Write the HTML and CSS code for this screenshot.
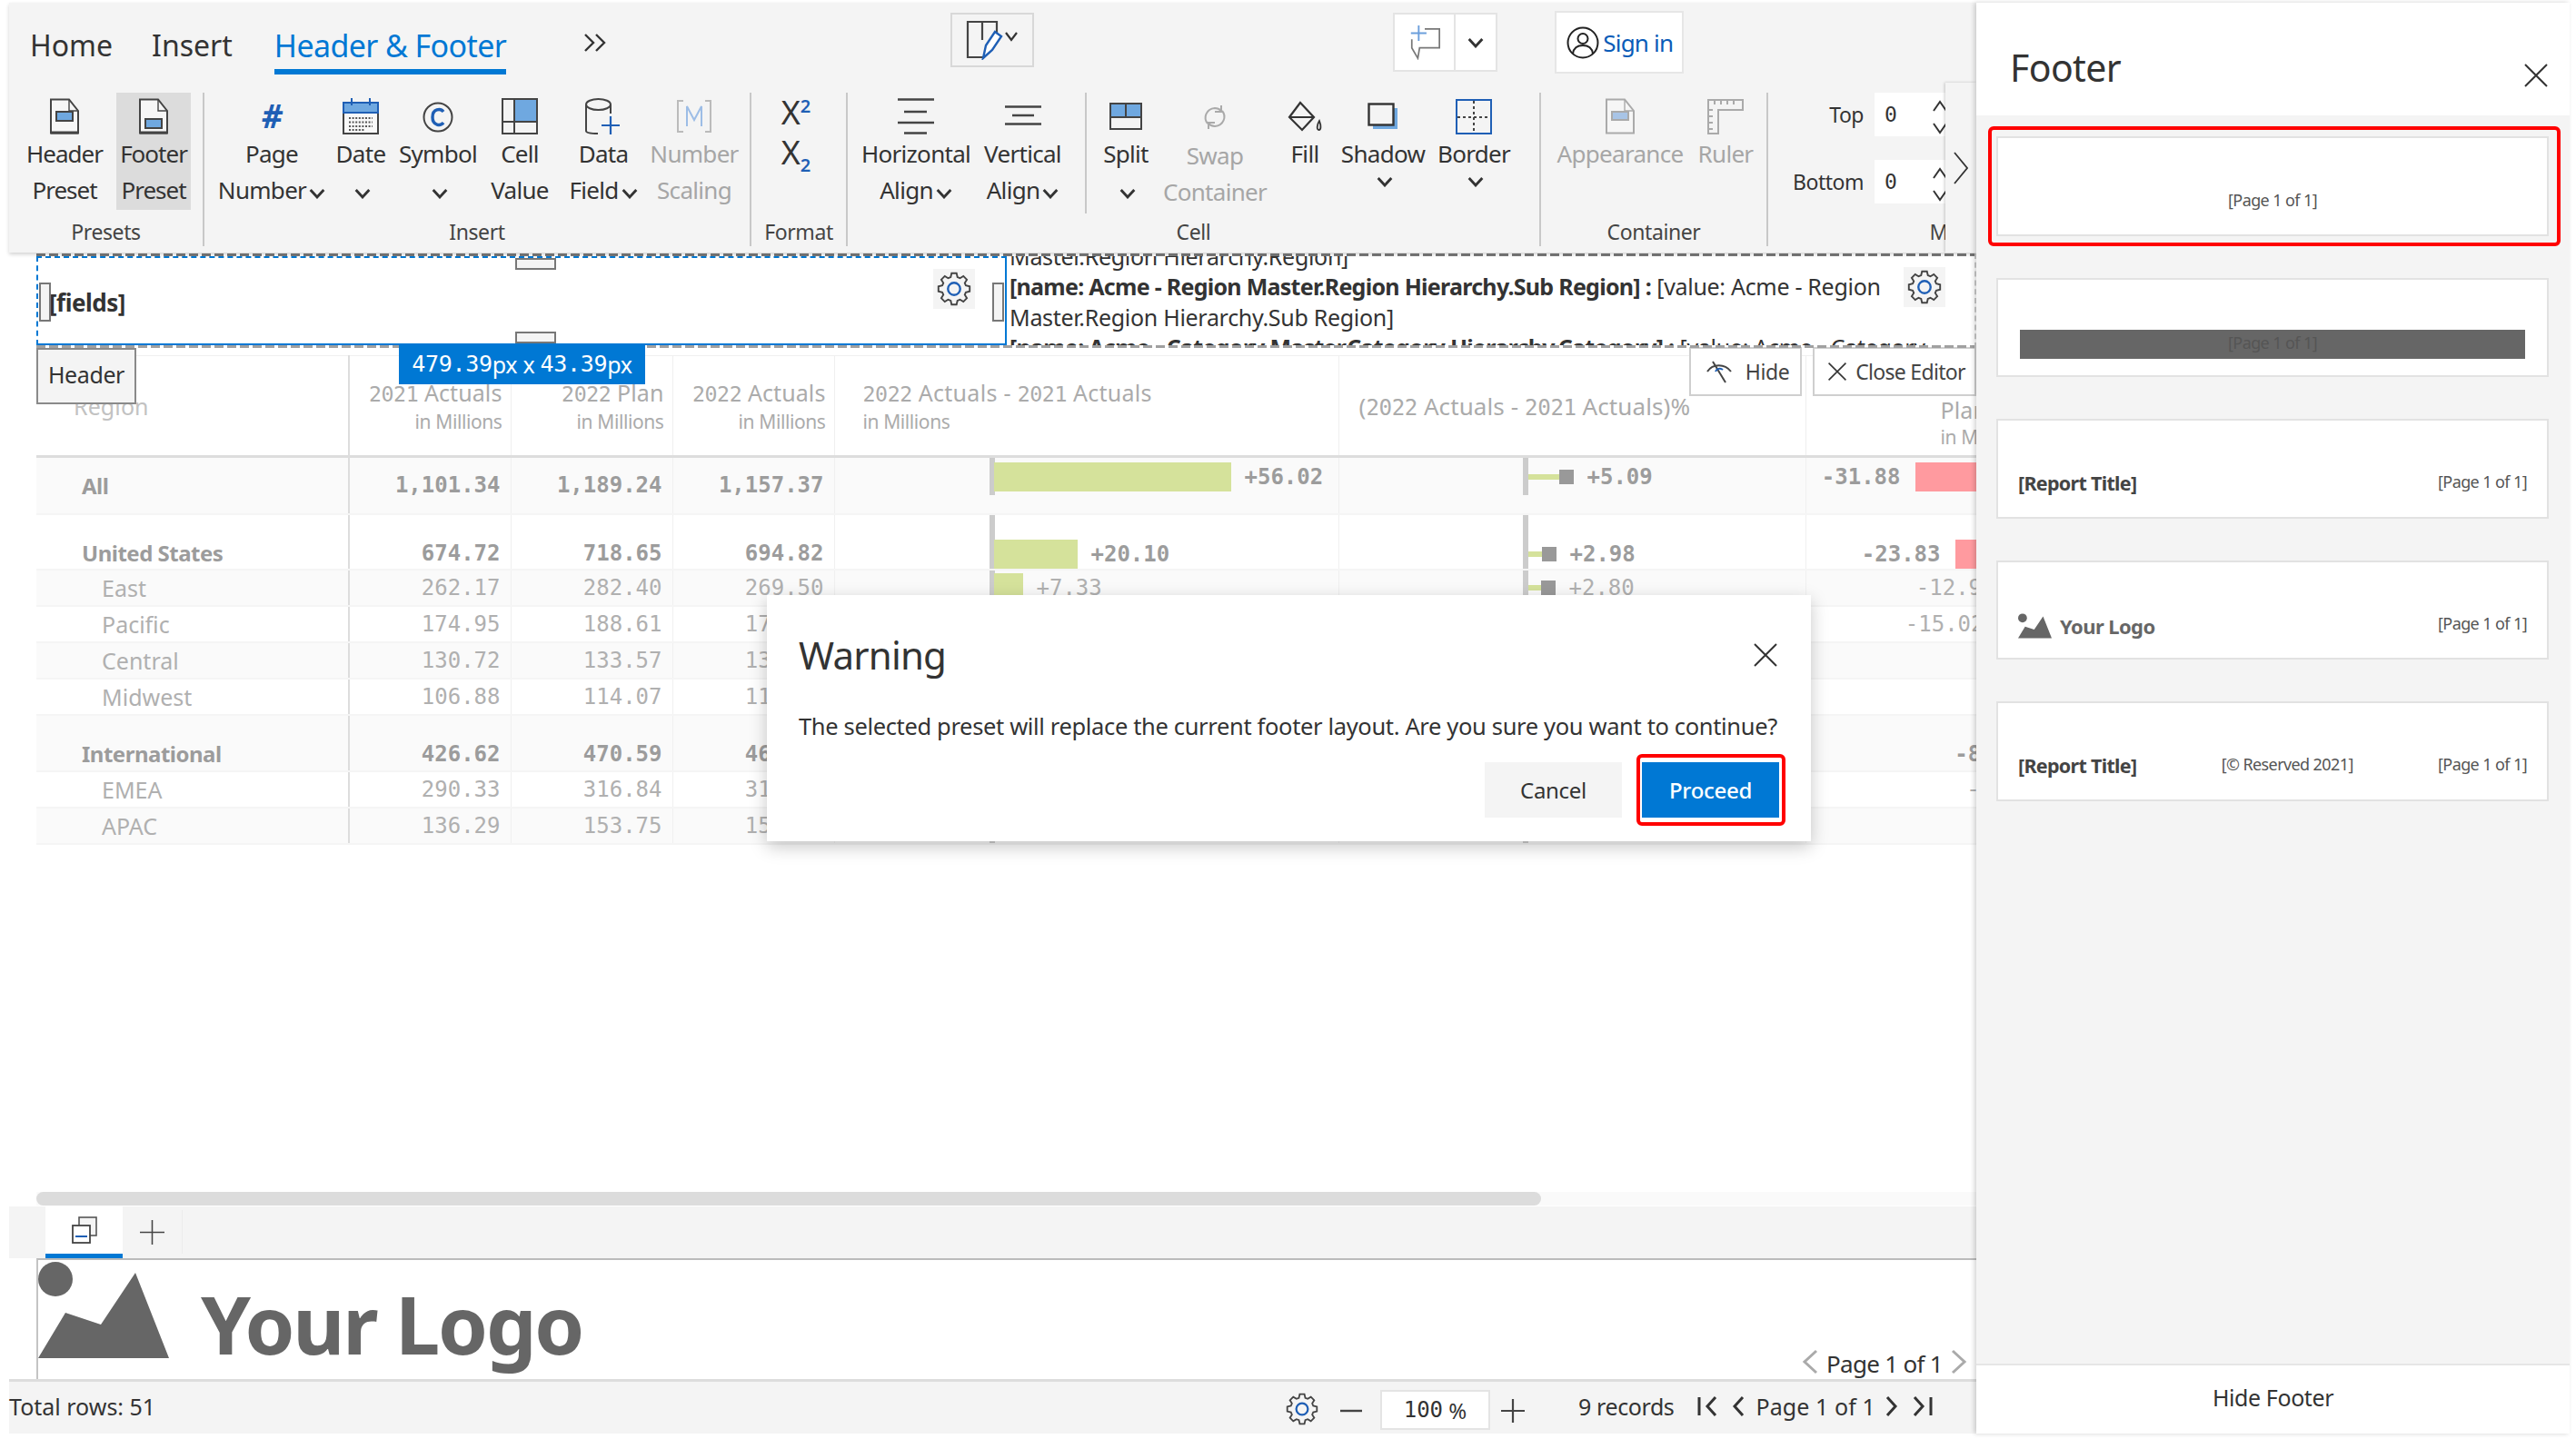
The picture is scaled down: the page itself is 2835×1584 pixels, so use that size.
FILE: index.html
```html
<!DOCTYPE html>
<html lang="en">
<head>
<meta charset="utf-8">
<title>Header &amp; Footer editor</title>
<link rel="stylesheet" href="styles.css">
</head>
<body>
<svg class="defs" width="0" height="0" aria-hidden="true">
  <symbol id="chev" viewBox="0 0 16 10"><polyline points="1.5,1.5 8,8.5 14.5,1.5" fill="none" stroke="#333" stroke-width="2.6"/></symbol>
  <symbol id="gear" viewBox="0 0 48 48">
    <path d="M19.3 7.66L20.56 2.27H27.44L28.69 7.66L32.24 9.13L36.93 6.2L41.8 11.07L38.87 15.76L40.34 19.31L45.73 20.56V27.44L40.34 28.69L38.87 32.24L41.8 36.93L36.93 41.8L32.24 38.87L28.69 40.34L27.44 45.73H20.56L19.31 40.34L15.76 38.87L11.07 41.8L6.2 36.93L9.13 32.24L7.66 28.69L2.27 27.44V20.56L7.66 19.31L9.13 15.76L6.2 11.07L11.07 6.2L15.76 9.13Z" fill="none" stroke="#444" stroke-width="2.4"/>
    <circle cx="24" cy="24" r="8.5" fill="none" stroke="#1f5fb5" stroke-width="3"/>
  </symbol>
  <symbol id="doc" viewBox="0 0 34 40">
    <path d="M2 1.5H22L32 14V38.5H2Z" fill="#f6f6f6" stroke="#444" stroke-width="2"/>
    <path d="M22 1.5V14H32" fill="none" stroke="#444" stroke-width="1.4"/>
    <path d="M2 38H32" stroke="#444" stroke-width="3"/>
  </symbol>
  <symbol id="mount" viewBox="0 0 144 106">
    <ellipse cx="19" cy="19" rx="19" ry="19" fill="#666"/>
    <path d="M0 106L30 56L69 69L107 12L144 106Z" fill="#666"/>
  </symbol>
  <symbol id="x" viewBox="0 0 28 28"><path d="M2 2L26 26M26 2L2 26" stroke="#333" stroke-width="2" fill="none"/></symbol>
</svg>

<div class="app">
  <main class="main">
    <section class="ribbon">
      <div class="tabs">
        <span class="tab">Home</span>
        <span class="tab tab-insert">Insert</span>
        <span class="tab tab-active">Header &amp; Footer</span>
        <svg class="more" viewBox="0 0 26 22"><path d="M2 2L11 11L2 20M14 2L23 11L14 20" fill="none" stroke="#333" stroke-width="2.4"/></svg>
        <div class="edit-box">
          <svg class="edit-icon" viewBox="0 0 64 44"><path d="M22 41H4V2H36V14M20 2V22" fill="none" stroke="#444" stroke-width="2.2"/><path d="M21 42L24 28L34 13L41 18L31 33Z" fill="#fff" stroke="#1f5fb5" stroke-width="2.4"/><polyline points="46,14 52,22 58,14" fill="none" stroke="#333" stroke-width="2.2"/></svg>
        </div>
        <div class="comment-box">
          <span class="comment-main"><svg class="comment-icon" viewBox="0 0 40 40"><path d="M20 4H37V26H14L12 38L5 26V16" fill="none" stroke="#777" stroke-width="1.8"/><path d="M13 0V18M4 9H22" stroke="#6c9fdc" stroke-width="2" fill="none"/></svg></span>
          <span class="comment-more"><svg class="chev-md"><use href="#chev"/></svg></span>
        </div>
        <div class="signin"><svg class="avatar" viewBox="0 0 36 36"><circle cx="18" cy="18" r="16.5" fill="none" stroke="#222" stroke-width="2"/><circle cx="18" cy="13.5" r="5.5" fill="none" stroke="#222" stroke-width="2"/><path d="M7 30C8 23 13 21 18 21C23 21 28 23 29 30" fill="none" stroke="#222" stroke-width="2"/></svg><span>Sign in</span></div>
      </div>

      <div class="tools">
        <div class="group g-presets">
          <div class="items">
            <div class="rb"><div class="ic"><svg class="ic-doc" viewBox="0 0 34 40"><use href="#doc"/><rect x="8" y="15" width="18" height="10" fill="#6fa8e0" stroke="#444" stroke-width="2"/></svg></div><div>Header</div><div>Preset</div></div>
            <div class="rb rb-on"><div class="ic"><svg class="ic-doc" viewBox="0 0 34 40"><use href="#doc"/><rect x="8" y="23" width="18" height="10" fill="#6fa8e0" stroke="#444" stroke-width="2"/></svg></div><div>Footer</div><div>Preset</div></div>
          </div>
          <div class="glabel">Presets</div>
        </div>

        <div class="group g-insert">
          <div class="items">
            <div class="rb"><div class="ic"><span class="hash">#</span></div><div>Page</div><div>Number<svg class="chev"><use href="#chev"/></svg></div></div>
            <div class="rb"><div class="ic"><svg class="ic-cal" viewBox="0 0 40 40"><rect x="1" y="5" width="38" height="34" fill="#f8f8f8" stroke="#444" stroke-width="2"/><rect x="1" y="5" width="38" height="11" fill="#6fa8e0" stroke="#1f5fb5" stroke-width="2"/><path d="M10 0V8M30 0V8" stroke="#1f5fb5" stroke-width="2"/><path d="M7 22H33M7 26.5H33M7 31H33M7 35H25" stroke="#555" stroke-width="2" stroke-dasharray="2 1.6"/></svg></div><div>Date</div><div><svg class="chev"><use href="#chev"/></svg></div></div>
            <div class="rb"><div class="ic"><svg class="ic-sym" viewBox="0 0 34 34"><circle cx="17" cy="17" r="15.5" fill="none" stroke="#444" stroke-width="2"/><path d="M23 11C20 7 11 7.5 11 17C11 26.5 20 27 23 23" fill="none" stroke="#1f5fb5" stroke-width="3.4"/></svg></div><div>Symbol</div><div><svg class="chev"><use href="#chev"/></svg></div></div>
            <div class="rb"><div class="ic"><svg class="ic-cell" viewBox="0 0 40 40"><rect x="14" y="1" width="25" height="25" fill="#6fa8e0"/><path d="M1 1H39V39H1ZM14 1V39M1 26H39" fill="none" stroke="#444" stroke-width="2"/></svg></div><div>Cell</div><div>Value</div></div>
            <div class="rb"><div class="ic"><svg class="ic-data" viewBox="0 0 40 40"><path d="M1 7V36C1 38 4 39 14 39M28 17V7" fill="none" stroke="#444" stroke-width="2"/><ellipse cx="14.5" cy="7" rx="13.5" ry="6" fill="none" stroke="#444" stroke-width="2"/><path d="M28 20V40M18 30H38" stroke="#1f5fb5" stroke-width="2.2"/></svg></div><div>Data</div><div>Field<svg class="chev"><use href="#chev"/></svg></div></div>
            <div class="rb rb-off"><div class="ic"><svg class="ic-m" viewBox="0 0 38 36"><path d="M7 1H1V35H7M31 1H37V35H31" fill="none" stroke="#bbb" stroke-width="2"/><path d="M11 29V7L19 22L27 7V29" fill="none" stroke="#9dbde6" stroke-width="2"/></svg></div><div>Number</div><div>Scaling</div></div>
          </div>
          <div class="glabel">Insert</div>
        </div>

        <div class="group g-format">
          <div class="items fmt">
            <div class="fmt-x">X<sup>2</sup></div>
            <div class="fmt-x">X<sub>2</sub></div>
          </div>
          <div class="glabel">Format</div>
        </div>

        <div class="group g-cell">
          <div class="items">
            <div class="sub-align">
              <div class="rb"><div class="ic"><svg class="ic-h" viewBox="0 0 42 40"><path d="M1 1.5H41M8 15H33M1 27H41M8 38.5H33" stroke="#444" stroke-width="2.6"/></svg></div><div>Horizontal</div><div>Align<svg class="chev"><use href="#chev"/></svg></div></div>
              <div class="rb"><div class="ic"><svg class="ic-v" viewBox="0 0 42 22"><path d="M1 1.5H41M9 11H33M1 20.5H41" stroke="#444" stroke-width="2.6"/></svg></div><div>Vertical</div><div>Align<svg class="chev"><use href="#chev"/></svg></div></div>
            </div>
            <div class="sub-cell">
              <div class="rb"><div class="ic"><svg class="ic-split" viewBox="0 0 36 30"><rect x="1" y="1" width="34" height="15" fill="#6fa8e0"/><path d="M1 1H35V29H1ZM1 16H35M18 1V16" fill="none" stroke="#444" stroke-width="2"/></svg></div><div>Split</div><div><svg class="chev"><use href="#chev"/></svg></div></div>
              <div class="rb rb-off"><div class="ic"><svg class="ic-swap" viewBox="0 0 28 26"><path d="M6 20C1 14 4 4 14 3C17 3 19 4 21 6M22 6C27 12 24 22 14 23C11 23 9 22 7 20" fill="none" stroke="#aaa" stroke-width="2"/><path d="M21 0V7H14M7 26V19H14" fill="none" stroke="#aaa" stroke-width="2"/></svg></div><div>Swap</div><div>Container</div></div>
              <div class="rb"><div class="ic"><svg class="ic-fill" viewBox="0 0 38 34"><path d="M14 2L2 18L16 32L29 18Z" fill="none" stroke="#333" stroke-width="2.2"/><path d="M3 18H28" stroke="#333" stroke-width="2"/><path d="M35 22C37 27 37 32 34.5 32C32 32 32 27 35 22Z" fill="none" stroke="#333" stroke-width="1.8"/></svg></div><div>Fill</div><div class="blank"></div></div>
              <div class="rb"><div class="ic"><svg class="ic-shadow" viewBox="0 0 34 30"><rect x="6" y="6" width="27" height="23" fill="#6fa8e0"/><rect x="1.5" y="1.5" width="27" height="23" fill="#f4f4f4" stroke="#333" stroke-width="2.4"/></svg></div><div>Shadow</div><div class="chev-row"><svg class="chev"><use href="#chev"/></svg></div></div>
              <div class="rb"><div class="ic"><svg class="ic-border" viewBox="0 0 40 40"><rect x="1" y="2" width="38" height="37" fill="none" stroke="#1f5fb5" stroke-width="2"/><path d="M20 3V38M2 21H38" stroke="#444" stroke-width="2" stroke-dasharray="3 3"/></svg></div><div>Border</div><div class="chev-row"><svg class="chev"><use href="#chev"/></svg></div></div>
            </div>
          </div>
          <div class="glabel">Cell</div>
        </div>

        <div class="group g-container">
          <div class="items">
            <div class="rb rb-off"><div class="ic"><svg class="ic-doc" viewBox="0 0 34 40"><path d="M2 1.5H22L32 14V38.5H2Z" fill="#f6f6f6" stroke="#aaa" stroke-width="2"/><path d="M22 1.5V14H32" fill="none" stroke="#aaa" stroke-width="1.4"/><rect x="8" y="15" width="18" height="9" fill="#a8c4e6" stroke="#aaa" stroke-width="2"/></svg></div><div>Appearance</div><div class="blank"></div></div>
            <div class="rb rb-off"><div class="ic"><svg class="ic-ruler" viewBox="0 0 40 38"><path d="M1 38V1H39V12H12V38Z" fill="none" stroke="#aaa" stroke-width="2"/><path d="M8 1V6M15 1V6M22 1V6M29 1V6M1 12H6M1 19H6M1 26H6M1 33H6" stroke="#aaa" stroke-width="2"/></svg></div><div>Ruler</div><div class="blank"></div></div>
          </div>
          <div class="glabel">Container</div>
        </div>

        <div class="group g-margin">
          <div class="items margins">
            <div class="mrow"><span class="mlabel">Top</span><span class="spin"><span class="mono">0</span><svg class="spin-arrows" viewBox="0 0 18 50"><path d="M2 21L9 11L16 21M2 35L9 45L16 35" fill="none" stroke="#333" stroke-width="2"/></svg></span></div>
            <div class="mrow"><span class="mlabel">Bottom</span><span class="spin"><span class="mono">0</span><svg class="spin-arrows" viewBox="0 0 18 50"><path d="M2 21L9 11L16 21M2 35L9 45L16 35" fill="none" stroke="#333" stroke-width="2"/></svg></span></div>
          </div>
          <div class="glabel">Margin</div>
        </div>
      </div>
      <div class="scroller"><svg viewBox="0 0 16 36"><path d="M1 1L15 18L1 35" fill="none" stroke="#333" stroke-width="1.8"/></svg></div>
    </section>

    <section class="strip">
      <div class="cell-sel">
        <span class="handle h-top"></span><span class="handle h-bottom"></span><span class="handle h-left"></span><span class="handle h-right"></span>
        <strong class="fields">[fields]</strong>
        <span class="gear-btn"><svg class="gear"><use href="#gear"/></svg></span>
      </div>
      <div class="cell-text">
        <div class="lines">
          <div>Master.Region Hierarchy.Region]</div>
          <div><b>[name: Acme - Region Master.Region Hierarchy.Sub Region] :</b> [value: Acme - Region</div>
          <div>Master.Region Hierarchy.Sub Region]</div>
          <div><b>[name: Acme - Category Master.Category Hierarchy.Category] :</b> [value: Acme - Category</div>
        </div>
        <span class="gear-btn"><svg class="gear"><use href="#gear"/></svg></span>
      </div>
      <span class="size-tip"><span class="mono">479.39</span>px x <span class="mono">43.39</span>px</span>
    </section>

    <section class="report">
      <span class="tag-header">Header</span>
      <span class="float-btn fb-hide"><svg class="fb-icon" viewBox="0 0 30 28"><path d="M2 14C8 5 21 5 28 14" fill="none" stroke="#444" stroke-width="2"/><path d="M8 3L22 26" stroke="#444" stroke-width="2"/><path d="M11 14A5 5 0 0 1 19 12" fill="none" stroke="#1f5fb5" stroke-width="2"/></svg>Hide</span>
      <span class="float-btn fb-close"><svg class="fb-x"><use href="#x"/></svg>Close Editor</span>
      <table class="grid">
        <colgroup><col class="c-r"><col class="c-n"><col class="c-n"><col class="c-n"><col class="c-a"><col class="c-b"><col class="c-c"></colgroup>
        <thead>
          <tr>
            <th class="th-region">Region</th>
            <th><div><span class="d">2021</span> Actuals</div><small>in Millions</small></th>
            <th><div><span class="d">2022</span> Plan</div><small>in Millions</small></th>
            <th><div><span class="d">2022</span> Actuals</div><small>in Millions</small></th>
            <th class="th-left"><div><span class="d">2022</span> Actuals - <span class="d">2021</span> Actuals</div><small>in Millions</small></th>
            <th class="th-mid"><div>(<span class="d">2022</span> Actuals - <span class="d">2021</span> Actuals)%</div></th>
            <th class="th-plan"><div>Plan</div><small>in Millions</small></th>
          </tr>
        </thead>
        <tbody>
          <tr class="r-top alt bold">
            <td class="rg">All</td><td>1,101.34</td><td>1,189.24</td><td>1,157.37</td>
            <td class="ch"><div class="axis"><i class="bar" style="width:261px"></i><span class="dv">+56.02</span></div></td>
            <td class="ch"><div class="axis"><i class="lol" style="width:34px"></i><i class="sq"></i><span class="dv">+5.09</span></div></td>
            <td class="ch"><div class="neg"><span class="dv">-31.88</span><i class="bar red" style="width:148px"></i></div></td>
          </tr>
          <tr class="r-grp bold">
            <td class="rg">United States</td><td>674.72</td><td>718.65</td><td>694.82</td>
            <td class="ch"><div class="axis"><i class="bar" style="width:92px"></i><span class="dv">+20.10</span></div></td>
            <td class="ch"><div class="axis"><i class="lol" style="width:15px"></i><i class="sq"></i><span class="dv">+2.98</span></div></td>
            <td class="ch"><div class="neg"><span class="dv">-23.83</span><i class="bar red" style="width:104px"></i></div></td>
          </tr>
          <tr class="r-det alt">
            <td class="rg sub">East</td><td>262.17</td><td>282.40</td><td>269.50</td>
            <td class="ch"><div class="axis"><i class="bar" style="width:32px"></i><span class="dv">+7.33</span></div></td>
            <td class="ch"><div class="axis"><i class="lol" style="width:14px"></i><i class="sq"></i><span class="dv">+2.80</span></div></td>
            <td class="ch"><div class="neg"><span class="dv">-12.91</span><i class="bar red" style="width:44px"></i></div></td>
          </tr>
          <tr class="r-det">
            <td class="rg sub">Pacific</td><td>174.95</td><td>188.61</td><td>178.54</td>
            <td class="ch"><div class="axis"></div></td><td class="ch"><div class="axis"></div></td>
            <td class="ch"><div class="neg"><span class="dv">-15.02</span><i class="bar red" style="width:56px"></i></div></td>
          </tr>
          <tr class="r-det alt">
            <td class="rg sub">Central</td><td>130.72</td><td>133.57</td><td>135.46</td>
            <td class="ch"><div class="axis"></div></td><td class="ch"><div class="axis"></div></td><td class="ch"></td>
          </tr>
          <tr class="r-det">
            <td class="rg sub">Midwest</td><td>106.88</td><td>114.07</td><td>111.32</td>
            <td class="ch"><div class="axis"></div></td><td class="ch"><div class="axis"></div></td><td class="ch"></td>
          </tr>
          <tr class="r-grp r-intl alt bold">
            <td class="rg">International</td><td>426.62</td><td>470.59</td><td>462.55</td>
            <td class="ch"><div class="axis"></div></td><td class="ch"><div class="axis"></div></td>
            <td class="ch"><div class="neg"><span class="dv">-8.04</span><i class="bar red" style="width:16px"></i></div></td>
          </tr>
          <tr class="r-det">
            <td class="rg sub">EMEA</td><td>290.33</td><td>316.84</td><td>311.32</td>
            <td class="ch"><div class="axis"></div></td><td class="ch"><div class="axis"></div></td>
            <td class="ch"><div class="neg"><span class="dv">-5.52</span><i class="bar red" style="width:3px"></i></div></td>
          </tr>
          <tr class="r-det alt">
            <td class="rg sub">APAC</td><td>136.29</td><td>153.75</td><td>151.23</td>
            <td class="ch"><div class="axis"></div></td><td class="ch"><div class="axis"></div></td><td class="ch"></td>
          </tr>
        </tbody>
      </table>
    </section>

    <div class="hscroll"><div class="hthumb"></div></div>

    <div class="sheet-tabs">
      <span class="sheet-tab"><svg class="sheet-icon" viewBox="0 0 28 30"><rect x="8" y="1" width="19" height="20" fill="#f4f4f4" stroke="#555" stroke-width="1.6"/><rect x="1" y="10" width="19" height="19" fill="#fff" stroke="#444" stroke-width="1.8"/><path d="M4 22H17" stroke="#1f5fb5" stroke-width="2"/></svg></span>
      <span class="sheet-add"><svg viewBox="0 0 28 28"><path d="M14 0V28M0 14H28" stroke="#444" stroke-width="1.6"/></svg></span>
    </div>

    <div class="report-footer">
      <div class="logo"><svg class="logo-mark"><use href="#mount"/></svg><span class="logo-text">Your Logo</span></div>
      <div class="pager"><svg class="pg-ch" viewBox="0 0 18 28"><path d="M16 2L3 14L16 26" fill="none" stroke="#aaa" stroke-width="3"/></svg><span>Page 1 of 1</span><svg class="pg-ch" viewBox="0 0 18 28"><path d="M2 2L15 14L2 26" fill="none" stroke="#aaa" stroke-width="3"/></svg></div>
    </div>

    <footer class="status">
      <span class="total">Total rows: 51</span>
      <div class="status-right">
        <svg class="gear st-gear"><use href="#gear"/></svg>
        <svg class="st-pm" viewBox="0 0 26 26"><path d="M1 13H25" stroke="#444" stroke-width="2.4"/></svg>
        <span class="zoom-box"><span class="mono">100</span> %</span>
        <svg class="st-pm" viewBox="0 0 26 26"><path d="M13 0V26M0 13H26" stroke="#444" stroke-width="2.2"/></svg>
        <span class="records">9 records</span>
        <svg class="st-nav nav-first" viewBox="0 0 24 24"><path d="M2 2V22M20 2L11 12L20 22" fill="none" stroke="#333" stroke-width="3"/></svg>
        <svg class="st-nav" viewBox="0 0 14 24"><path d="M12 2L3 12L12 22" fill="none" stroke="#333" stroke-width="3"/></svg>
        <span class="st-page">Page 1 of 1</span>
        <svg class="st-nav" viewBox="0 0 14 24"><path d="M2 2L11 12L2 22" fill="none" stroke="#333" stroke-width="3"/></svg>
        <svg class="st-nav nav-last" viewBox="0 0 24 24"><path d="M4 2L13 12L4 22M22 2V22" fill="none" stroke="#333" stroke-width="3"/></svg>
      </div>
    </footer>
  </main>

  <aside class="panel">
    <header class="panel-head"><h2>Footer</h2><svg class="panel-x"><use href="#x"/></svg></header>
    <div class="panel-body">
      <div class="card card-center selected"><span>[Page 1 of 1]</span></div>
      <div class="card card-bar"><div class="dark-bar">[Page 1 of 1]</div></div>
      <div class="card"><b class="c-title">[Report Title]</b><span>[Page 1 of 1]</span></div>
      <div class="card"><div class="c-logo"><svg><use href="#mount"/></svg><b>Your Logo</b></div><span>[Page 1 of 1]</span></div>
      <div class="card"><b class="c-title">[Report Title]</b><span>[© Reserved 2021]</span><span>[Page 1 of 1]</span></div>
    </div>
    <footer class="panel-foot">Hide Footer</footer>
  </aside>

  <div class="dialog">
    <div class="dlg-head"><h3>Warning</h3><svg class="dlg-x"><use href="#x"/></svg></div>
    <p>The selected preset will replace the current footer layout. Are you sure you want to continue?</p>
    <div class="dlg-actions"><span class="btn btn-cancel">Cancel</span><span class="btn btn-proceed">Proceed</span></div>
  </div>
</div>
</body>
</html>
```
FILE: styles.css
```css
* { box-sizing: border-box; }
html, body { margin: 0; padding: 0; background: #fff; overflow: hidden; }
body { font-family: "Noto Sans", "Open Sans", sans-serif; color: #333; width: 2835px; height: 1584px; }
.defs { position: absolute; }
.mono { font-family: "DejaVu Sans Mono", monospace; }
.app { position: relative; display: flex; width: 2828px; height: 1575px; margin: 3px 0 0 0; padding-left: 10px; }
.main { width: 2165px; flex: none; display: flex; flex-direction: column; }

/* ribbon */
.ribbon { position: relative; height: 275px; flex: none; background: #f4f4f4; box-shadow: 0 2px 4px rgba(0,0,0,.18); z-index: 3; overflow: hidden; }
.tabs { height: 99px; display: flex; align-items: flex-start; padding-left: 23px; }
.tab { font-size: 32px; line-height: 44px; margin-top: 25px; color: #333; }
.tab-insert { margin-left: 43px; }
.tab-active { margin-left: 46px; font-size: 34px; color: #0078d4; height: 54px; border-bottom: 6px solid #0078d4; letter-spacing: -.6px; }
.more { width: 26px; height: 22px; margin: 33px 0 0 85px; }
.edit-box { width: 92px; height: 60px; margin: 11px 0 0 378px; border: 2px solid #d8d8d8; display: flex; align-items: center; justify-content: center; }
.edit-icon { width: 64px; height: 44px; margin-left: 2px; }
.comment-box { display: flex; width: 115px; height: 65px; margin: 11px 0 0 395px; border: 2px solid #e4e4e4; background: #fff; }
.comment-main { width: 67px; display: flex; align-items: center; justify-content: center; border-right: 2px solid #e4e4e4; }
.comment-icon { width: 38px; height: 38px; }
.comment-more { flex: 1; display: flex; align-items: center; justify-content: center; }
.chev-md { width: 18px; height: 12px; }
.signin { width: 142px; height: 69px; margin: 9px 0 0 63px; background: #fff; border: 2px solid #e6e6e6; display: flex; align-items: center; gap: 4px; padding-left: 11px; color: #0a5cb8; font-size: 26px; letter-spacing: -.8px; }
.avatar { width: 36px; height: 36px; }

.tools { display: flex; height: 169px; }
.group { display: flex; flex-direction: column; border-right: 2px solid #c8c8c8; height: 169px; flex: none; }
.items { display: flex; height: 129px; }
.glabel { font-size: 23px; line-height: 32px; margin-top: 8px; text-align: center; color: #444; letter-spacing: -.4px; white-space: nowrap; }
.rb { flex: none; display: flex; flex-direction: column; align-items: center; font-size: 26px; line-height: 40px; color: #333; letter-spacing: -.7px; white-space: nowrap; }
.rb > div { height: 40px; }
.rb > .ic { height: 47px; display: flex; align-items: center; justify-content: center; padding-top: 4px; }
.rb-off { color: #a6a6a6; }
.rb-on { background: #dcdcdc; }
.blank { height: 40px; }
.chev { width: 18px; height: 12px; margin-left: 3px; }
.rb > .chev-row { margin-top: -13px; }
.ic-doc { width: 34px; height: 40px; }
.hash { font-size: 36px; line-height: 36px; font-weight: 700; font-style: italic; color: #1f5fb5; }
.ic-cal, .ic-cell, .ic-data, .ic-border, .ic-ruler { width: 40px; height: 40px; }
.ic-sym { width: 34px; height: 34px; margin-top: 3px; }
.ic-m { width: 38px; height: 36px; }
.ic-h { width: 42px; height: 40px; }
.ic-v { width: 42px; height: 22px; margin-top: -2px; }
.ic-split { width: 36px; height: 30px; }
.ic-swap { width: 28px; height: 26px; }
.ic-fill { width: 38px; height: 34px; }
.ic-shadow { width: 34px; height: 30px; }

.g-presets { width: 215px; }
.g-presets .items { padding-left: 20px; gap: 16px; }
.g-presets .rb { width: 82px; letter-spacing: -1px; }
.g-insert { width: 602px; }
.g-insert .items { padding-left: 15px; }
.g-insert .rb:nth-child(1) { width: 118px; }
.g-insert .rb:nth-child(2) { width: 78px; }
.g-insert .rb:nth-child(3) { width: 92px; }
.g-insert .rb:nth-child(4) { width: 88px; }
.g-insert .rb:nth-child(5) { width: 96px; }
.g-insert .rb:nth-child(6) { width: 104px; }
.g-format { width: 106px; }
.fmt { flex-direction: column; align-items: center; padding-right: 6px; gap: 0; padding-top: 0; }
.fmt-x { font-size: 36px; line-height: 44px; height: 44px; color: #333; }
.fmt-x sup, .fmt-x sub { font-size: 20px; color: #1f5fb5; font-weight: 600; line-height: 0; }
.g-cell { width: 763px; }
.sub-align { display: flex; width: 263px; padding-left: 15px; height: 133px; border-right: 2px solid #c8c8c8; }
.sub-align .rb:nth-child(1) { width: 120px; }
.sub-align .rb:nth-child(2) { width: 115px; }
.sub-cell { display: flex; padding-left: 8px; }
.sub-cell .rb:nth-child(1) { width: 70px; }
.sub-cell .rb:nth-child(2) { width: 126px; }
.sub-cell .rb:nth-child(2) > .ic { height: 49px; }
.sub-cell .rb:nth-child(3) { width: 72px; }
.sub-cell .rb:nth-child(4) { width: 100px; }
.sub-cell .rb:nth-child(5) { width: 100px; }
.g-container { width: 250px; }
.g-container .items { padding-left: 17px; }
.g-container .rb:nth-child(1) { width: 140px; }
.g-container .rb:nth-child(2) { width: 92px; }
.g-margin { width: 500px; border: 0; }
.g-margin .glabel { width: 430px; }
.margins { flex-direction: column; gap: 26px; width: 195px; }
.mrow { display: flex; justify-content: flex-end; align-items: center; height: 48px; gap: 12px; font-size: 23px; letter-spacing: -.5px; }
.spin { width: 78px; height: 48px; background: #fff; display: flex; align-items: center; justify-content: space-between; padding-left: 11px; font-size: 23px; }
.spin-arrows { width: 18px; height: 50px; margin-right: -3px; }
.scroller { position: absolute; right: 0; top: 88px; width: 34px; height: 187px; background: #f4f4f4; box-shadow: -1px 0 3px rgba(0,0,0,.2); display: flex; align-items: center; justify-content: center; }
.scroller svg { width: 16px; height: 36px; }

/* editor strip */
.strip { position: relative; flex: none; margin: 1px 0 0 30px; height: 104px; padding: 3px 0; display: flex; background-image: repeating-linear-gradient(90deg, #7a7a7a 0 10px, transparent 10px 14px), repeating-linear-gradient(90deg, #a0a0a0 0 10px, transparent 10px 14px); background-size: 100% 3px; background-position: top, bottom; background-repeat: no-repeat; border-right: 2px dashed #ccc; z-index: 2; }
.cell-sel { position: relative; width: 1068px; flex: none; border: 2px dashed #0078d4; border-width: 2px 0 2px 2px; border-bottom-style: solid; border-right: 2px solid #0078d4; display: flex; align-items: center; }
.fields { font-size: 26px; margin: 0 0 0 12px; letter-spacing: -.5px; padding-top: 4px; }
.handle { position: absolute; background: #f4f4f4; border: 2px solid #777; }
.h-top { left: 525px; top: 0; width: 45px; height: 13px; }
.h-bottom { left: 525px; bottom: 0; width: 45px; height: 13px; }
.h-left { left: 1px; top: 27px; width: 13px; height: 43px; }
.h-right { right: 1px; top: 27px; width: 13px; height: 43px; }
.gear-btn { position: absolute; top: 12px; background: #f4f4f4; display: flex; align-items: center; justify-content: center; height: 44px; width: 46px; }
.cell-sel .gear-btn { left: 985px; }
.cell-text .gear-btn { right: 32px; }
.gear { width: 38px; height: 38px; }
.cell-text { position: relative; flex: 1; overflow: hidden; display: flex; flex-direction: column; justify-content: center; padding: 3px 0 0 3px; font-size: 25px; line-height: 33.4px; white-space: nowrap; letter-spacing: -.3px; color: #333; }
.cell-text b { letter-spacing: -.72px; }
.lines { flex: none; }
.size-tip { position: absolute; left: 399px; top: 99px; width: 271px; height: 45px; background: #0078d4; color: #fff; display: flex; align-items: center; justify-content: center; font-size: 25px; white-space: pre; letter-spacing: -.3px; z-index: 5; }

/* report table */
.report { position: relative; flex: 1; margin: 8px 0 0 30px; min-height: 0; z-index: 1; }
.grid { border-collapse: collapse; table-layout: fixed; width: 2216px; border-top: 1px solid #f0f0f0; }
.c-r { width: 344px; } .c-n { width: 178px; } .c-a { width: 555px; } .c-b { width: 514px; } .c-c { width: 269px; }
.grid th { height: 111px; padding: 25px 9px 0 0; font-weight: 400; font-size: 25px; line-height: 30px; color: #ababab; text-align: right; border-right: 1px solid #efefef; border-bottom: 3px solid #ddd; vertical-align: top; letter-spacing: .1px; white-space: nowrap; }
.grid th small { display: block; font-size: 21px; line-height: 30px; letter-spacing: -.4px; }
.d { font-family: "DejaVu Sans Mono", monospace; font-size: .93em; letter-spacing: -.4px; }
.grid .th-region { text-align: left; padding: 40px 0 0 41px; color: #c2c2c2; border-right: 2px solid #ddd; }
.grid .th-left { text-align: left; padding-left: 31px; letter-spacing: .3px; }
.grid .th-mid { text-align: left; padding: 40px 0 0 22px; font-size: 26px; letter-spacing: .1px; }
.grid .th-plan { text-align: left; padding: 44px 0 0 148px; border-right: 0; }
.grid td { padding: 0 11px 0 0; text-align: right; font-family: "DejaVu Sans Mono", monospace; font-size: 24px; color: #b0b0b0; border-right: 1px solid #f0f0f0; border-bottom: 2px solid #f5f5f5; white-space: nowrap; }
.alt td { background: #fafafa; }
.bold td { color: #9c9c9c; font-weight: 700; }
.grid .rg { text-align: left; font-family: "Noto Sans", sans-serif; padding-left: 50px; border-right: 2px solid #ddd; letter-spacing: -.5px; }
.grid .sub { padding-left: 72px; font-weight: 400; font-size: 25px; letter-spacing: 0; }
.r-top td { height: 63px; }
.r-grp td { height: 60px; padding-top: 25px; }
.r-intl td { height: 61px; padding-top: 24px; }
.r-det td { height: 39px; }
.grid .ch { padding: 0; text-align: left; vertical-align: top; font-weight: 700; }
.axis, .neg { display: flex; align-items: center; height: 38px; }
.axis { border-left: 6px solid #ccc; margin-left: 170px; }
.neg { justify-content: flex-end; }
.bar { display: block; flex: none; height: 32px; background: #d5e29b; margin-left: -1px; }
.bar.red { background: #ff9a9f; margin-left: 16px; }
.lol { display: block; flex: none; height: 6px; background: #d5e29b; }
.sq { display: block; flex: none; width: 16px; height: 16px; background: #999; }
.dv { margin-left: 15px; }
.neg .dv { margin-left: 0; }
.r-det .dv { font-weight: 400; color: #b0b0b0; }
.r-top .axis, .r-top .neg { height: 41px; padding-top: 5px; align-items: flex-start; }
.r-top .dv { line-height: 32px; }
.r-top .sq { margin-top: 8px; }
.r-top .lol { margin-top: 13px; }
.r-grp .ch { padding-top: 0; }
.r-grp .axis, .r-grp .neg { height: 59px; padding-top: 27px; align-items: center; }
.r-intl .axis, .r-intl .neg { height: 60px; padding-top: 25px; }
.grid tr .ch:nth-child(6) .axis { margin-left: 202px; }

.tag-header { position: absolute; left: 0; top: -8px; width: 110px; height: 62px; background: #f4f4f4; border: 2px solid #8a8a8a; font-size: 25px; line-height: 54px; text-align: center; letter-spacing: -.4px; z-index: 3; }
.float-btn { position: absolute; top: -9px; height: 54px; background: #fff; border: 2px solid #cfcfcf; display: flex; align-items: center; justify-content: center; gap: 14px; font-size: 23px; letter-spacing: -.4px; color: #444; z-index: 3; }
.fb-hide { left: 1819px; width: 124px; padding-left: 4px; }
.fb-close { left: 1955px; width: 180px; gap: 9px; letter-spacing: -.7px; padding-left: 4px; }
.fb-icon { width: 30px; height: 28px; }
.fb-x { width: 22px; height: 26px; }

.hscroll { flex: none; height: 15px; margin-left: 30px; background: #fafafa; }
.hthumb { width: 1656px; height: 15px; border-radius: 8px; background: #dcdcdc; }
.sheet-tabs { flex: none; height: 57px; margin: 1px 0 0 0; padding-left: 40px; background: #f4f4f4; display: flex; }
.sheet-tab { width: 85px; background: #fff; border-bottom: 5px solid #0078d4; display: flex; align-items: center; justify-content: center; }
.sheet-icon { width: 28px; height: 30px; }
.sheet-add { width: 66px; display: flex; align-items: center; justify-content: center; border-right: 1px solid #ececec; height: 48px; margin-top: 4px; }
.sheet-add svg { width: 27px; height: 27px; }

.report-footer { position: relative; flex: none; height: 133px; margin-left: 30px; border-top: 2px solid #bbb; border-left: 2px solid #c4c4c4; display: flex; justify-content: space-between; align-items: flex-end; }
.logo { display: flex; align-items: flex-start; align-self: flex-start; color: #666; }
.logo-mark { width: 144px; height: 106px; margin-top: 2px; }
.logo-text { font-size: 88px; line-height: 120px; font-weight: 700; margin-left: 35px; letter-spacing: -2.2px; height: 120px; margin-top: 10px; }
.pager { display: flex; align-items: center; gap: 9px; font-size: 26px; letter-spacing: -.7px; margin: 0 10px -1px 0; height: 36px; }
.pg-ch { width: 18px; height: 28px; margin-top: -4px; }

.status { flex: none; height: 60px; padding-bottom: 3px; border-top: 3px solid #ddd; background: #f4f4f4; display: flex; justify-content: space-between; align-items: center; font-size: 25px; letter-spacing: 0; }
.status-right { display: flex; align-items: center; padding-right: 48px; }
.st-gear { width: 36px; height: 38px; margin-top: 6px; }
.st-pm { width: 26px; height: 26px; margin-top: 10px; }
.st-gear + .st-pm { margin-left: 23px; }
.zoom-box { width: 121px; height: 44px; margin: 8px 12px 0 19px; background: #fff; border: 2px solid #e4e4e4; display: flex; align-items: center; justify-content: center; font-size: 24px; white-space: pre; }
.records { margin-left: 59px; letter-spacing: -.4px; }
.st-nav { width: 14px; height: 24px; margin-left: 14px; }
.nav-first { width: 24px; margin-left: 26px; }
.nav-last { width: 24px; }
.st-page { margin-left: 12px; margin-right: -3px; letter-spacing: .1px; }

/* panel */
.panel { width: 653px; flex: none; display: flex; flex-direction: column; background: #f4f4f4; box-shadow: -2px 0 5px rgba(0,0,0,.18); z-index: 6; }
.panel-head { height: 124px; flex: none; background: #fff; display: flex; justify-content: space-between; padding: 0 23px 0 37px; }
.panel-head h2 { margin: 0; font-weight: 400; font-size: 41px; line-height: 56px; padding-top: 43px; letter-spacing: -.6px; color: #333; }
.panel-x { width: 28px; height: 28px; margin-top: 66px; }
.panel-body { flex: 1; padding: 23px 23px 0 22px; display: flex; flex-direction: column; gap: 46px; }
.card { height: 109.5px; flex: none; background: #fff; border: 2px solid #e2e2e2; display: flex; justify-content: space-between; padding: 53px 22px 0 22px; font-size: 18px; line-height: 28px; color: #555; letter-spacing: -.6px; white-space: nowrap; }
.c-title { margin-top: 2px; font-size: 21.5px; color: #444; letter-spacing: -.7px; }
.c-logo { display: flex; align-items: center; gap: 9px; height: 28px; color: #666; font-size: 22px; letter-spacing: -.6px; margin-top: 3px; }
.c-logo svg { width: 37px; height: 28px; }
.card-center { justify-content: center; padding: 54px 0 0; }
.selected { position: relative; }
.selected::after { content: ""; position: absolute; left: -11px; top: -13px; right: -15px; bottom: -13px; border: 4px solid #f00; border-radius: 6px; }
.card-bar { padding: 55px 24px 0; }
.dark-bar { width: 100%; height: 32px; background: #666; color: #555; text-align: center; line-height: 28px; }
.panel-foot { height: 77px; flex: none; padding-bottom: 5px; background: #fff; border-top: 2px solid #e6e6e6; display: flex; align-items: center; justify-content: center; font-size: 25px; letter-spacing: -.4px; }

/* dialog */
.dialog { position: absolute; left: 844px; top: 652px; width: 1149px; height: 271px; background: #fff; box-shadow: 0 6px 18px rgba(0,0,0,.22); z-index: 5; padding: 0 35px 0 35px; }
.dlg-head { display: flex; justify-content: space-between; height: 100px; }
.dlg-head h3 { margin: 0; font-weight: 400; font-size: 42px; line-height: 58px; padding-top: 37px; letter-spacing: -.8px; color: #333; }
.dlg-x { width: 30px; height: 28px; margin-top: 52px; }
.dialog p { margin: 26px 0 0; font-size: 25.5px; line-height: 36px; letter-spacing: -.35px; white-space: nowrap; color: #333; }
.dlg-actions { position: absolute; right: 35px; top: 184px; display: flex; gap: 22px; }
.btn { width: 151px; height: 61px; display: flex; align-items: center; justify-content: center; font-size: 24px; letter-spacing: -.3px; }
.btn-cancel { background: #f4f4f4; color: #333; }
.btn-proceed { position: relative; background: #0078d4; color: #fff; font-weight: 500; }
.btn-proceed::after { content: ""; position: absolute; left: -6px; top: -9px; right: -7px; bottom: -9px; border: 4px solid #f00; border-radius: 6px; }
```
